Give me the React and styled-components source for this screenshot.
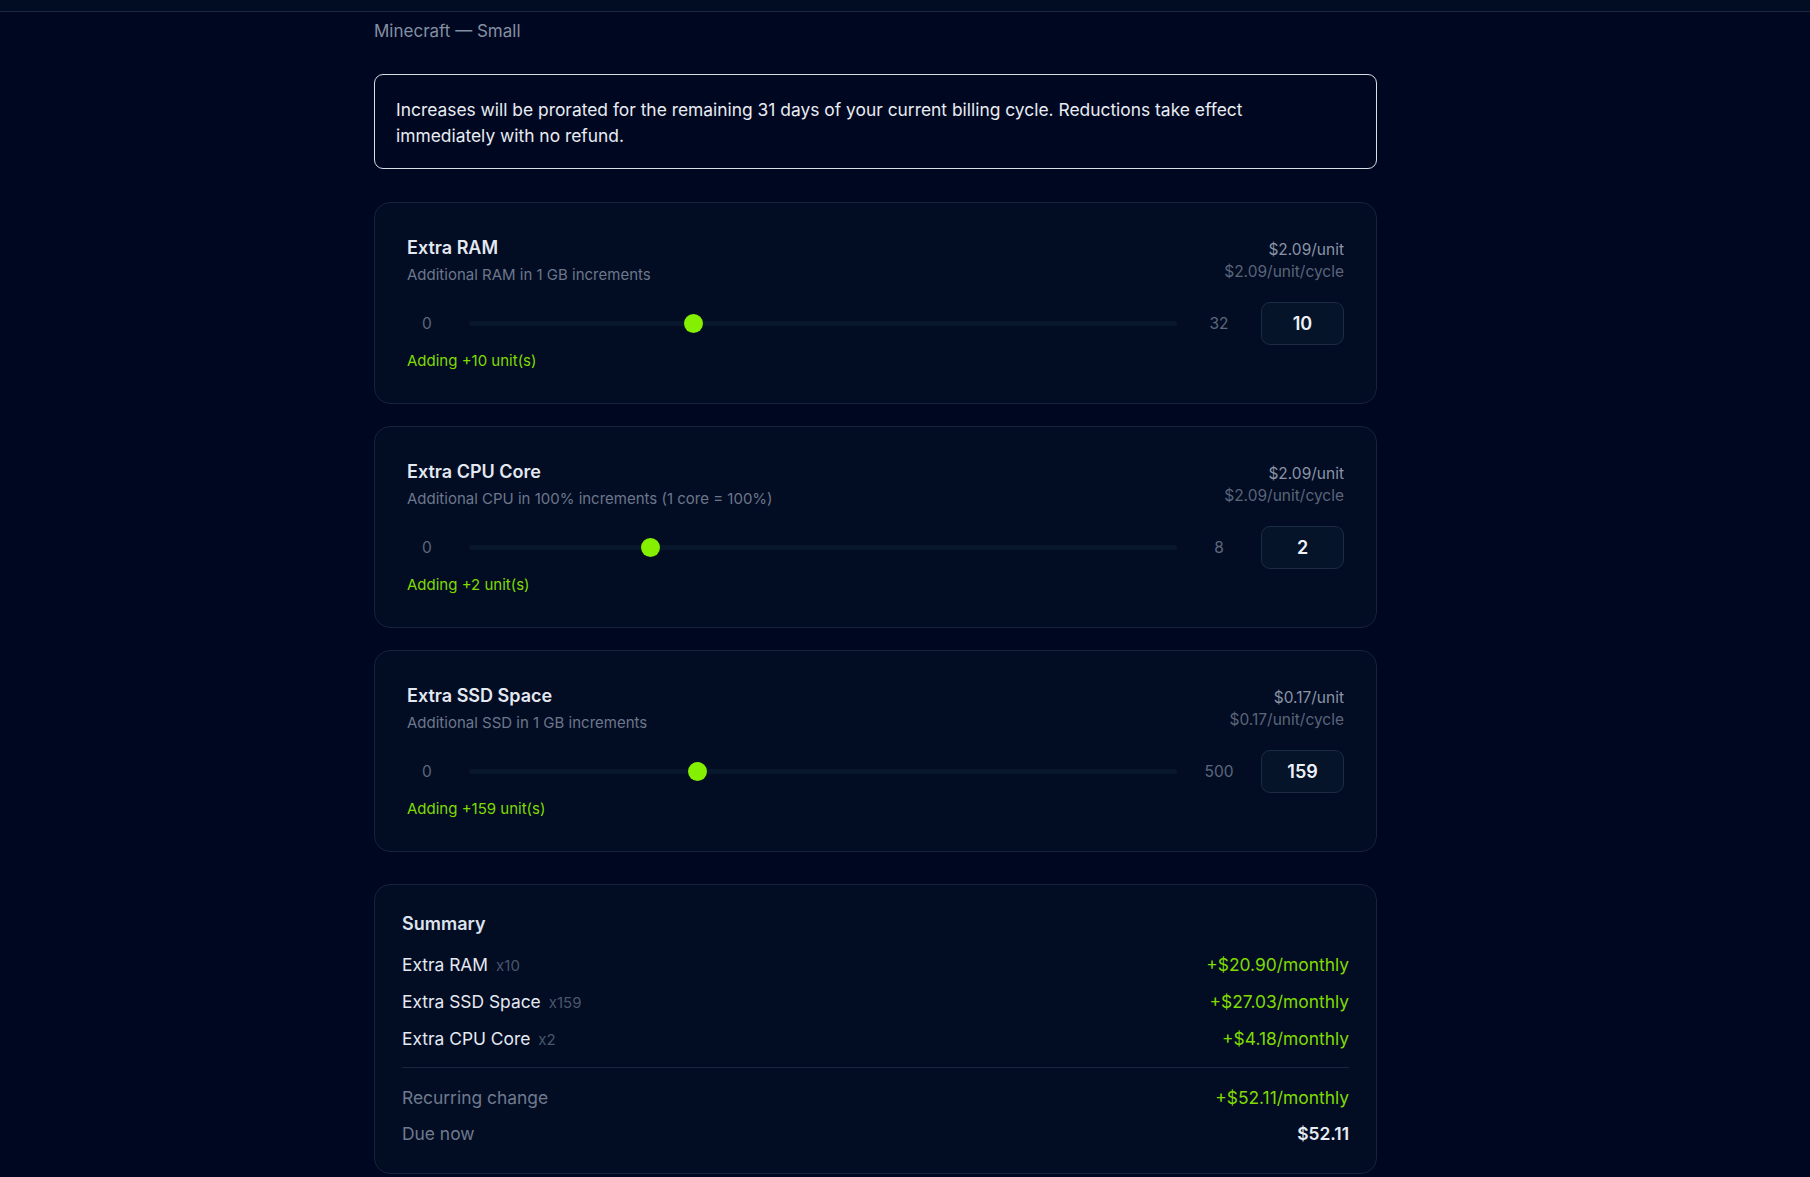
import React from "react";
import styled, { createGlobalStyle } from "styled-components";

const Global = createGlobalStyle`
  html, body { margin: 0; padding: 0; background: #000720; }
  body { font-family: "Inter", "Noto Sans", sans-serif; color: #e2e7f0; overflow: hidden; }
  * { box-sizing: border-box; }
`;

const TopBar = styled.div`
  height: 12px;
  background: #020d24;
  border-bottom: 1px solid #1b2740;
`;

const Main = styled.main`
  width: 1003px;
  margin-left: 374px;
  padding-top: 8px;
  display: flex;
  flex-direction: column;
`;

const Subtitle = styled.div`
  font-size: 17px;
  line-height: 22px;
  color: #858fa2;
`;

const Notice = styled.div`
  margin-top: 32px;
  border: 1px solid #d9dde5;
  border-radius: 9px;
  padding: 22px 44px 19px 21px;
  font-size: 17.4px;
  line-height: 26px;
  color: #e8ecf3;
`;

const Cards = styled.div`
  margin-top: 33px;
  display: flex;
  flex-direction: column;
  gap: 22px;
`;

const Card = styled.section`
  background: #020c23;
  border: 1px solid #17233b;
  border-radius: 16px;
  padding: ${(p) => p.$pad || "33px 32px 31px"};
`;

const Head = styled.div`
  display: flex;
  justify-content: space-between;
  align-items: flex-start;
`;

const Title = styled.div`
  font-size: 18px;
  line-height: 24px;
  font-weight: 600;
  color: #e3e8f1;
`;

const Desc = styled.div`
  margin-top: 4px;
  font-size: 15px;
  line-height: 22px;
  color: #6c778b;
`;

const Prices = styled.div`
  text-align: right;
  padding-top: 3px;
  font-size: 15.5px;
  line-height: 22px;
`;

const Price = styled.div`
  color: ${(p) => (p.$dim ? "#5a6579" : "#8a94a7")};
`;

const SliderRow = styled.div`
  margin-top: 16px;
  display: flex;
  align-items: center;
  gap: 22px;
  height: 43px;
`;

const Bound = styled.span`
  width: 40px;
  text-align: center;
  font-size: 15.5px;
  color: #5d687c;
  flex: none;
`;

const Track = styled.div`
  position: relative;
  flex: 1;
  height: 5px;
  border-radius: 3px;
  background: #08172c;
`;

const Thumb = styled.span`
  position: absolute;
  top: 50%;
  width: 19px;
  height: 19px;
  margin-top: -9.5px;
  border-radius: 50%;
  background: #84f000;
`;

const Qty = styled.div`
  flex: none;
  width: 83px;
  height: 43px;
  border-radius: 9px;
  background: #061429;
  border: 1px solid #1d2a43;
  display: flex;
  align-items: center;
  justify-content: center;
  font-size: 18px;
  font-weight: 600;
  color: #eef2f8;
`;

const Adding = styled.div`
  margin-top: 5px;
  font-size: 15px;
  line-height: 22px;
  color: #7fdb00;
`;

const SummaryCard = styled(Card)`
  margin-top: 32px;
`;

const SumTitle = styled.div`
  font-size: 18px;
  line-height: 24px;
  font-weight: 600;
  color: #dde3ed;
  margin-bottom: 10px;
`;

const Row = styled.div`
  display: flex;
  justify-content: space-between;
  align-items: baseline;
  height: ${(p) => p.$h || 37}px;
  line-height: ${(p) => p.$h || 37}px;
  font-size: 17.4px;
`;

const Label = styled.span`
  color: ${(p) => (p.$muted ? "#6f7a8e" : "#e4e9f2")};
`;

const Mult = styled.span`
  margin-left: 8px;
  font-size: 15px;
  color: #4a566b;
`;

const Amount = styled.span`
  color: ${(p) => (p.$plain ? "#e6ebf3" : "#7fdb00")};
  font-weight: ${(p) => (p.$plain ? 600 : 400)};
`;

const Divider = styled.hr`
  border: none;
  border-top: 1px solid #1a263d;
  margin: 10px 0 12px;
`;

const addons = [
  { title: "Extra RAM", desc: "Additional RAM in 1 GB increments", price: "$2.09", max: 32, value: 10 },
  { title: "Extra CPU Core", desc: "Additional CPU in 100% increments (1 core = 100%)", price: "$2.09", max: 8, value: 2 },
  { title: "Extra SSD Space", desc: "Additional SSD in 1 GB increments", price: "$0.17", max: 500, value: 159 },
];

const summary = [
  { name: "Extra RAM", qty: "x10", amount: "+$20.90/monthly" },
  { name: "Extra SSD Space", qty: "x159", amount: "+$27.03/monthly" },
  { name: "Extra CPU Core", qty: "x2", amount: "+$4.18/monthly" },
];

function AddonCard({ a }) {
  const pct = a.value / a.max;
  return (
    <Card>
      <Head>
        <div>
          <Title>{a.title}</Title>
          <Desc>{a.desc}</Desc>
        </div>
        <Prices>
          <Price>{a.price}/unit</Price>
          <Price $dim>{a.price}/unit/cycle</Price>
        </Prices>
      </Head>
      <SliderRow>
        <Bound>0</Bound>
        <Track>
          <Thumb style={{ left: `calc(${pct * 100}% - ${pct * 19}px)` }} />
        </Track>
        <Bound>{a.max}</Bound>
        <Qty>{a.value}</Qty>
      </SliderRow>
      <Adding>Adding +{a.value} unit(s)</Adding>
    </Card>
  );
}

export default function App() {
  return (
    <>
      <Global />
      <TopBar />
      <Main>
        <Subtitle>Minecraft — Small</Subtitle>
        <Notice>
          Increases will be prorated for the remaining 31 days of your current billing cycle. Reductions take effect
          immediately with no refund.
        </Notice>
        <Cards>
          {addons.map((a) => (
            <AddonCard key={a.title} a={a} />
          ))}
        </Cards>
        <SummaryCard $pad="27px 27px 21px">
          <SumTitle>Summary</SumTitle>
          {summary.map((s) => (
            <Row key={s.name}>
              <Label>
                {s.name}
                <Mult>{s.qty}</Mult>
              </Label>
              <Amount>{s.amount}</Amount>
            </Row>
          ))}
          <Divider />
          <Row $h={36}>
            <Label $muted>Recurring change</Label>
            <Amount>+$52.11/monthly</Amount>
          </Row>
          <Row $h={36}>
            <Label $muted>Due now</Label>
            <Amount $plain>$52.11</Amount>
          </Row>
        </SummaryCard>
      </Main>
    </>
  );
}
